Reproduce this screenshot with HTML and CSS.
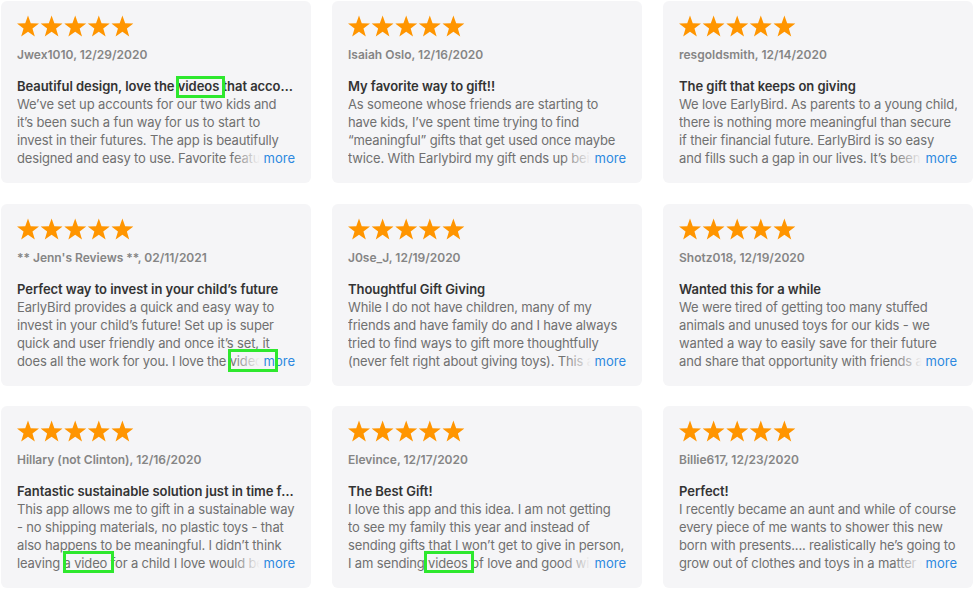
FILE: index.html
```html
<!DOCTYPE html>
<html lang="en">
<head>
  <meta charset="UTF-8" />
  <title>Ratings and Reviews</title>
  <link rel="stylesheet" href="styles.css">
</head>
<body>
  <svg class="defs" width="0" height="0">
    <symbol id="star" viewBox="0 0 22 22">
      <polygon points="11,0.4 13.76,8.2 22,8.42 15.47,13.45 17.82,21.38 11,16.7 4.18,21.38 6.53,13.45 0,8.42 8.24,8.2" />
    </symbol>
  </svg>

  <main class="reviews">
    <article class="review">
      <svg class="stars" viewBox="0 0 118 22"><use href="#star" width="22" height="22" x="0"/><use href="#star" width="22" height="22" x="23.6"/><use href="#star" width="22" height="22" x="47.2"/><use href="#star" width="22" height="22" x="70.8"/><use href="#star" width="22" height="22" x="94.4"/></svg>
      <p class="author">Jwex1010, 12/29/2020</p>
      <h3 class="title">Beautiful design, love the videos that accompany each gift</h3>
      <div class="body">
        <p>We’ve set up accounts for our two kids and<br>it’s been such a fun way for us to start to<br>invest in their futures. The app is beautifully<br>designed and easy to use. Favorite feature is the videos we can send along.</p>
        <a class="more" href="#">more</a>
      </div>
    </article>

    <article class="review">
      <svg class="stars" viewBox="0 0 118 22"><use href="#star" width="22" height="22" x="0"/><use href="#star" width="22" height="22" x="23.6"/><use href="#star" width="22" height="22" x="47.2"/><use href="#star" width="22" height="22" x="70.8"/><use href="#star" width="22" height="22" x="94.4"/></svg>
      <p class="author">Isaiah Oslo, 12/16/2020</p>
      <h3 class="title">My favorite way to gift!!</h3>
      <div class="body">
        <p>As someone whose friends are starting to<br>have kids, I’ve spent time trying to find<br>“meaningful” gifts that get used once maybe<br>twice. With Earlybird my gift ends up being something that grows.</p>
        <a class="more" href="#">more</a>
      </div>
    </article>

    <article class="review">
      <svg class="stars" viewBox="0 0 118 22"><use href="#star" width="22" height="22" x="0"/><use href="#star" width="22" height="22" x="23.6"/><use href="#star" width="22" height="22" x="47.2"/><use href="#star" width="22" height="22" x="70.8"/><use href="#star" width="22" height="22" x="94.4"/></svg>
      <p class="author">resgoldsmith, 12/14/2020</p>
      <h3 class="title">The gift that keeps on giving</h3>
      <div class="body">
        <p>We love EarlyBird. As parents to a young child,<br>there is nothing more meaningful than secure<br>if their financial future. EarlyBird is so easy<br>and fills such a gap in our lives. It’s been a great way to get family involved.</p>
        <a class="more" href="#">more</a>
      </div>
    </article>

    <article class="review">
      <svg class="stars" viewBox="0 0 118 22"><use href="#star" width="22" height="22" x="0"/><use href="#star" width="22" height="22" x="23.6"/><use href="#star" width="22" height="22" x="47.2"/><use href="#star" width="22" height="22" x="70.8"/><use href="#star" width="22" height="22" x="94.4"/></svg>
      <p class="author">** Jenn's Reviews **, 02/11/2021</p>
      <h3 class="title">Perfect way to invest in your child’s future</h3>
      <div class="body">
        <p>EarlyBird provides a quick and easy way to<br>invest in your child’s future! Set up is super<br>quick and user friendly and once it’s set, it<br>does all the work for you. I love the videos that family can record.</p>
        <a class="more" href="#">more</a>
      </div>
    </article>

    <article class="review">
      <svg class="stars" viewBox="0 0 118 22"><use href="#star" width="22" height="22" x="0"/><use href="#star" width="22" height="22" x="23.6"/><use href="#star" width="22" height="22" x="47.2"/><use href="#star" width="22" height="22" x="70.8"/><use href="#star" width="22" height="22" x="94.4"/></svg>
      <p class="author">J0se_J, 12/19/2020</p>
      <h3 class="title">Thoughtful Gift Giving</h3>
      <div class="body">
        <p>While I do not have children, many of my<br>friends and have family do and I have always<br>tried to find ways to gift more thoughtfully<br>(never felt right about giving toys). This app makes it simple.</p>
        <a class="more" href="#">more</a>
      </div>
    </article>

    <article class="review">
      <svg class="stars" viewBox="0 0 118 22"><use href="#star" width="22" height="22" x="0"/><use href="#star" width="22" height="22" x="23.6"/><use href="#star" width="22" height="22" x="47.2"/><use href="#star" width="22" height="22" x="70.8"/><use href="#star" width="22" height="22" x="94.4"/></svg>
      <p class="author">Shotz018, 12/19/2020</p>
      <h3 class="title">Wanted this for a while</h3>
      <div class="body">
        <p>We were tired of getting too many stuffed<br>animals and unused toys for our kids - we<br>wanted a way to easily save for their future<br>and share that opportunity with friends and family.</p>
        <a class="more" href="#">more</a>
      </div>
    </article>

    <article class="review">
      <svg class="stars" viewBox="0 0 118 22"><use href="#star" width="22" height="22" x="0"/><use href="#star" width="22" height="22" x="23.6"/><use href="#star" width="22" height="22" x="47.2"/><use href="#star" width="22" height="22" x="70.8"/><use href="#star" width="22" height="22" x="94.4"/></svg>
      <p class="author">Hillary (not Clinton), 12/16/2020</p>
      <h3 class="title">Fantastic sustainable solution just in time for the holidays</h3>
      <div class="body">
        <p>This app allows me to gift in a sustainable way<br>- no shipping materials, no plastic toys - that<br>also happens to be meaningful. I didn’t think<br>leaving a video for a child I love would be so special.</p>
        <a class="more" href="#">more</a>
      </div>
    </article>

    <article class="review">
      <svg class="stars" viewBox="0 0 118 22"><use href="#star" width="22" height="22" x="0"/><use href="#star" width="22" height="22" x="23.6"/><use href="#star" width="22" height="22" x="47.2"/><use href="#star" width="22" height="22" x="70.8"/><use href="#star" width="22" height="22" x="94.4"/></svg>
      <p class="author">Elevince, 12/17/2020</p>
      <h3 class="title">The Best Gift!</h3>
      <div class="body">
        <p>I love this app and this idea. I am not getting<br>to see my family this year and instead of<br>sending gifts that I won’t get to give in person,<br>I am sending videos of love and good wishes with every gift.</p>
        <a class="more" href="#">more</a>
      </div>
    </article>

    <article class="review">
      <svg class="stars" viewBox="0 0 118 22"><use href="#star" width="22" height="22" x="0"/><use href="#star" width="22" height="22" x="23.6"/><use href="#star" width="22" height="22" x="47.2"/><use href="#star" width="22" height="22" x="70.8"/><use href="#star" width="22" height="22" x="94.4"/></svg>
      <p class="author">Billie617, 12/23/2020</p>
      <h3 class="title">Perfect!</h3>
      <div class="body">
        <p>I recently became an aunt and while of course<br>every piece of me wants to shower this new<br>born with presents.... realistically he’s going to<br>grow out of clothes and toys in a matter of months.</p>
        <a class="more" href="#">more</a>
      </div>
    </article>

    <!-- highlight boxes drawn over the words -->
    <span class="mark mark-1"></span>
    <span class="mark mark-2"></span>
    <span class="mark mark-3"></span>
    <span class="mark mark-4"></span>
  </main>
</body>
</html>
```

FILE: styles.css
```css
* { margin: 0; padding: 0; box-sizing: border-box; }
body { font-family: Inter, "Noto Sans", sans-serif; background: #fff; color: #333; }
.defs { position: absolute; }

.reviews { position: relative; display: grid; grid-template-columns: repeat(3, 310px); grid-auto-rows: 182px; gap: 20.5px 21px; padding: 1px; }
.review { background: #f5f5f7; border-radius: 6px; padding: 14px 16px 16px; display: flex; flex-direction: column; }

.stars { display: block; width: 118px; height: 22px; fill: #ff9500; }
.author { margin-top: 9px; font-size: 12px; line-height: 18px; font-weight: 600; color: #858585; }
.title { margin-top: 14px; font-size: 13px; line-height: 17px; font-weight: 600; color: #333; letter-spacing: -0.05px; white-space: nowrap; overflow: hidden; text-overflow: ellipsis; }

.body { position: relative; height: 72px; overflow: hidden; white-space: nowrap; font-size: 13px; line-height: 18px; letter-spacing: -0.15px; color: #707070; }
.more { position: absolute; right: 0; bottom: 0; padding-left: 32px; line-height: 18px; letter-spacing: 0; color: #2d89e0; text-decoration: none; background: linear-gradient(to right, rgba(245,245,247,0), #f5f5f7 28px); }

.mark { position: absolute; border: 3px solid #2ee82e; }
.mark-1 { left: 176px; top: 76px; width: 49px; height: 22px; }
.mark-2 { left: 228px; top: 349px; width: 50px; height: 23px; }
.mark-3 { left: 63px; top: 551px; width: 51px; height: 22px; }
.mark-4 { left: 424px; top: 551px; width: 50px; height: 22px; }
```
